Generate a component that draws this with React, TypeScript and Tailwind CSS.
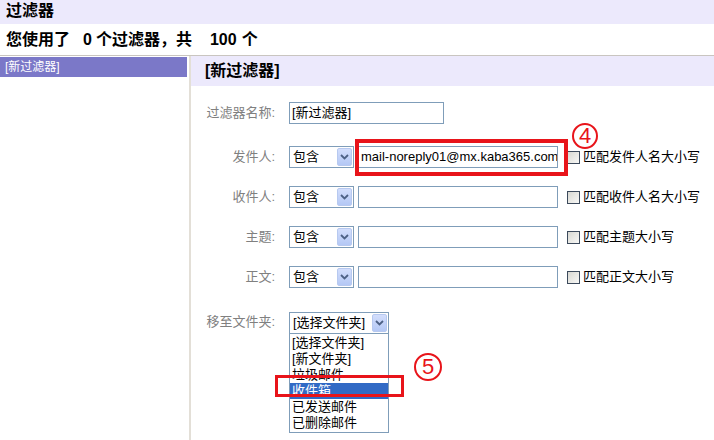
import React from "react";

const labelCls = "w-[85px] shrink-0 text-right text-[13px] text-[#808080] pr-[1px]";

function Chevron() {
  return (
    <svg width="9" height="6" viewBox="0 0 9 6" className="block">
      <path d="M1 1 L4.5 4.5 L8 1" fill="none" stroke="#4d6185" strokeWidth="1.8" />
    </svg>
  );
}

function SelectBox({ value, width }: { value: string; width: string }) {
  return (
    <div className={`${width} h-[22px] shrink-0 border border-[#7f9db9] bg-white flex items-center`}>
      <span className="flex-1 pl-[3px] text-[13px] leading-[20px] whitespace-nowrap overflow-hidden">{value}</span>
      <span className="w-[15px] h-[18px] mr-[1px] rounded-[2px] bg-gradient-to-b from-[#d3defc] to-[#b4c8f5] border border-[#b7c9f0] flex items-center justify-center">
        <Chevron />
      </span>
    </div>
  );
}

function CheckLabel({ text }: { text: string }) {
  return (
    <div className="flex items-center ml-[9px] whitespace-nowrap">
      <span className="w-[13px] h-[13px] border border-[#3c4a5c] bg-gradient-to-br from-[#d8d8d2] to-[#f8f8f6]" />
      <span className="ml-[3px] text-[13px] text-black">{text}</span>
    </div>
  );
}

function RuleRow({ label, value, check }: { label: string; value?: string; check: string }) {
  return (
    <div className="flex items-center h-[22px]">
      <div className={labelCls}>{label}</div>
      <div className="ml-[13px] flex items-center">
        <SelectBox value="包含" width="w-[65px]" />
        <div className="ml-[4px] w-[200px] h-[22px] border border-[#7f9db9] bg-white text-[13px] leading-[20px] pl-[2px] overflow-hidden whitespace-nowrap">
          {value}
        </div>
        <CheckLabel text={check} />
      </div>
    </div>
  );
}

function Marker({ n, size }: { n: string; size: string }) {
  return (
    <span className={`${size} rounded-full border-[2px] border-[#e8141a] text-[#e8141a] flex items-center justify-center text-[22px] leading-none`}>
      {n}
    </span>
  );
}

const folders = ["[选择文件夹]", "[新文件夹]", "垃圾邮件", "收件箱", "已发送邮件", "已删除邮件"];

export default function App() {
  return (
    <div
      className="w-[714px] h-[440px] overflow-hidden bg-white text-black"
      style={{ fontFamily: '"Liberation Sans", "Noto Sans CJK SC", sans-serif' }}
    >
      <div className="h-[24px] bg-[#ece9fc] pl-[6px] text-[16px] font-bold leading-[22px]">过滤器</div>
      <div className="h-[31px] pl-[6px] flex items-center text-[16px] font-bold whitespace-nowrap">
        <span>您使用了</span>
        <span className="ml-[13px] mr-[4px]">0</span>
        <span>个过滤器，共</span>
        <span className="ml-[18px] mr-[5px]">100</span>
        <span>个</span>
      </div>

      <div className="flex border-t border-[#c9c5c0] h-[385px]">
        <aside className="w-[187px] shrink-0 pt-[1px]">
          <div className="h-[20px] bg-[#7b78c8] text-white text-[12px] leading-[20px] pl-[5px]">[新过滤器]</div>
        </aside>

        <main className="relative ml-[2px] flex-1 border-l-[2px] border-[#e3dfd7]">
          <div className="h-[30px] bg-[#ece9fc] pl-[14px] text-[16px] font-bold leading-[30px]">[新过滤器]</div>

          <div className="flex items-center h-[22px] mt-[16px]">
            <div className={labelCls}>过滤器名称:</div>
            <div className="ml-[13px] w-[155px] h-[22px] border border-[#7f9db9] text-[13px] leading-[20px] pl-[2px]">
              [新过滤器]
            </div>
          </div>

          <div className="flex flex-col gap-[18px] mt-[22px]">
            <RuleRow label="发件人:" value="mail-noreply01@mx.kaba365.com" check="匹配发件人名大小写" />
            <RuleRow label="收件人:" check="匹配收件人名大小写" />
            <RuleRow label="主题:" check="匹配主题大小写" />
            <RuleRow label="正文:" check="匹配正文大小写" />
          </div>

          <div className="flex items-start mt-[24px]">
            <div className={`${labelCls} leading-[20px]`}>移至文件夹:</div>
            <div className="ml-[13px] flex flex-col">
              <SelectBox value="[选择文件夹]" width="w-[100px]" />
              <ul className="w-[100px] -mt-[1px] border border-[#7f9db9] bg-white py-[1px]">
                {folders.map((f) => (
                  <li
                    key={f}
                    className={`h-[16px] text-[13px] leading-[16px] pl-[2px] whitespace-nowrap ${
                      f === "收件箱" ? "bg-[#316ac5] text-white" : "text-black"
                    }`}
                  >
                    {f}
                  </li>
                ))}
              </ul>
            </div>
          </div>

          {/* annotations */}
          <div className="absolute left-[164px] top-[83px] w-[213px] h-[37px] border-[4px] border-[#e8141a]" />
          <div className="absolute left-[381px] top-[67px]">
            <Marker n="4" size="w-[26px] h-[26px]" />
          </div>
          <div className="absolute left-[84px] top-[319px] w-[129px] h-[22px] border-[3px] border-[#e8141a]" />
          <div className="absolute left-[223px] top-[297px]">
            <Marker n="5" size="w-[28px] h-[28px]" />
          </div>
        </main>
      </div>
    </div>
  );
}
